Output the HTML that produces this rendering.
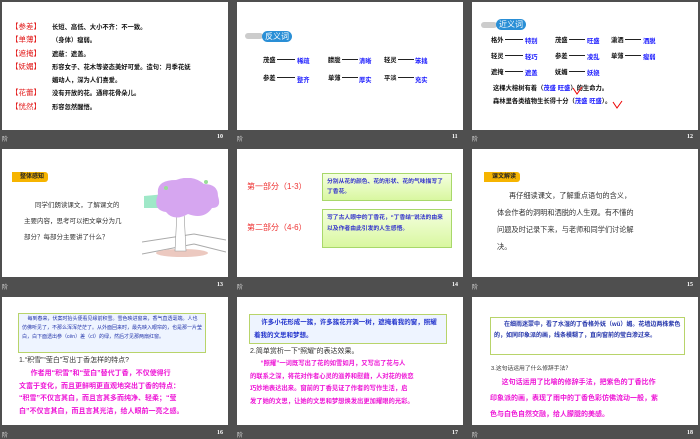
<!DOCTYPE html>
<html><head><meta charset="utf-8"><style>
*{margin:0;padding:0;box-sizing:border-box}
body{width:700px;height:438px;background:#4f4f4f;position:relative;overflow:hidden;font-family:"Liberation Sans","Noto Sans CJK SC",sans-serif}
.s{position:absolute;background:#fff;width:226px;height:128px}
.a{position:absolute;white-space:nowrap}
.w{white-space:normal}
.ft{position:absolute;color:#ddd;font-size:6px}
.pn{position:absolute;color:#fff;font-size:6px;font-weight:bold;font-family:"Liberation Serif",serif}
.r{color:#e21b1b;font-size:7.5px}
.k{color:#111;font-size:6.3px;font-weight:bold}
.b{color:#1a1aff;font-size:6.3px;font-weight:bold}
.ln{position:absolute;height:1px;background:#222}
.pill{position:absolute;background:#2a8fd6;color:#fff;border-radius:7px;font-size:8px;padding:0 3px;line-height:11px}
.tag{position:absolute;background:#f6b400;color:#222;font-size:6px;font-weight:bold;line-height:10px;padding:0 4px 0 8px;border-radius:0 3px 3px 0}
.m{color:#ee16d6;font-weight:bold}
</style></head><body>

<!-- slide 10 -->
<div class="s" style="left:2px;top:2px"></div>
<div class="a r" style="left:11px;top:20px;line-height:13.3px">【参差】<br>【单薄】<br>【遮掩】<br>【妩媚】<br><br>【花蕾】<br>【恍然】</div>
<div class="a k" style="left:52px;top:21px;line-height:13.3px">长短、高低、大小不齐：不一致。<br>（身体）瘦弱。<br>遮蔽：遮盖。<br>形容女子、花木等姿态美好可爱。造句：月季花妩<br>媚动人，深为人们喜爱。<br>没有开放的花。通称花骨朵儿。<br>形容忽然醒悟。</div>
<div class="ft" style="left:2px;top:134px">阶</div><div class="pn" style="left:217px;top:134px">10</div>

<!-- slide 11 -->
<div class="s" style="left:237px;top:2px"></div>
<div class="a" style="left:245px;top:33px;width:18px;height:6px;background:#ccc;border-radius:3px"></div>
<div class="pill" style="left:262px;top:31px">反义词</div>
<div class="a k" style="left:263px;top:55px">茂盛</div><div class="ln" style="left:277px;top:59px;width:18px"></div><div class="a b" style="left:297px;top:56px">稀疏</div>
<div class="a k" style="left:328px;top:55px">朦胧</div><div class="ln" style="left:342px;top:59px;width:16px"></div><div class="a b" style="left:359px;top:56px">清晰</div>
<div class="a k" style="left:384px;top:55px">轻灵</div><div class="ln" style="left:398px;top:59px;width:16px"></div><div class="a b" style="left:415px;top:56px">笨拙</div>
<div class="a k" style="left:263px;top:73px">参差</div><div class="ln" style="left:277px;top:77px;width:18px"></div><div class="a b" style="left:297px;top:75px">整齐</div>
<div class="a k" style="left:328px;top:73px">单薄</div><div class="ln" style="left:342px;top:77px;width:16px"></div><div class="a b" style="left:359px;top:75px">厚实</div>
<div class="a k" style="left:384px;top:73px">平淡</div><div class="ln" style="left:398px;top:77px;width:16px"></div><div class="a b" style="left:415px;top:75px">充实</div>
<div class="ft" style="left:237px;top:134px">阶</div><div class="pn" style="left:452px;top:134px">11</div>

<!-- slide 12 -->
<div class="s" style="left:472px;top:2px"></div>
<div class="a" style="left:481px;top:22px;width:16px;height:6px;background:#ccc;border-radius:3px"></div>
<div class="pill" style="left:496px;top:19px">近义词</div>
<div class="a k" style="left:491px;top:35px">格外</div><div class="ln" style="left:505px;top:39px;width:18px"></div><div class="a b" style="left:525px;top:36px">特别</div>
<div class="a k" style="left:555px;top:35px">茂盛</div><div class="ln" style="left:569px;top:39px;width:16px"></div><div class="a b" style="left:587px;top:36px">旺盛</div>
<div class="a k" style="left:611px;top:35px">潇洒</div><div class="ln" style="left:625px;top:39px;width:16px"></div><div class="a b" style="left:643px;top:36px">洒脱</div>
<div class="a k" style="left:491px;top:51px">轻灵</div><div class="ln" style="left:505px;top:55px;width:18px"></div><div class="a b" style="left:525px;top:52px">轻巧</div>
<div class="a k" style="left:555px;top:51px">参差</div><div class="ln" style="left:569px;top:55px;width:16px"></div><div class="a b" style="left:587px;top:52px">凌乱</div>
<div class="a k" style="left:611px;top:51px">单薄</div><div class="ln" style="left:625px;top:55px;width:16px"></div><div class="a b" style="left:643px;top:52px">瘦弱</div>
<div class="a k" style="left:491px;top:67px">遮掩</div><div class="ln" style="left:505px;top:71px;width:18px"></div><div class="a b" style="left:525px;top:68px">遮盖</div>
<div class="a k" style="left:555px;top:67px">妩媚</div><div class="ln" style="left:569px;top:71px;width:16px"></div><div class="a b" style="left:587px;top:68px">妖娆</div>
<div class="a k" style="left:493px;top:83px">这棵大榕树有着（<span class="b">茂盛 旺盛</span>）的生命力。</div>
<div class="a k" style="left:493px;top:96px">森林里各类植物生长得十分（<span class="b">茂盛 旺盛</span>）。</div>
<svg class="a" style="left:572px;top:86px" width="12" height="10"><path d="M1 2 L5 8 L10 1" stroke="#e00" fill="none"/></svg>
<svg class="a" style="left:612px;top:100px" width="12" height="10"><path d="M1 2 L5 8 L10 1" stroke="#e00" fill="none"/></svg>
<div class="ft" style="left:472px;top:134px">阶</div><div class="pn" style="left:687px;top:134px">12</div>

<!-- slide 13 -->
<div class="s" style="left:2px;top:149px"></div>
<div class="tag" style="left:12px;top:172px">整体感知</div>
<div class="a" style="left:24px;top:198px;font-size:6.5px;color:#333;line-height:16px">&nbsp;&nbsp;&nbsp;&nbsp;&nbsp;&nbsp;同学们朗读课文，了解课文的<br>主要内容，思考可以把文章分为几<br>部分？每部分主要讲了什么？</div>
<svg class="a" style="left:142px;top:178px" width="84" height="80">
<path d="M2 18 L24 16 L24 30 L2 30Z" fill="#9fe8c8"/>
<path d="M0 64 L52 56 M0 76 L52 66 M52 56 L84 62 M52 66 L84 74" stroke="#aaa" fill="none"/>
<ellipse cx="40" cy="75" rx="26" ry="4" fill="#ecc9c0"/>
<path d="M33 73 L35 34 L42 34 L44 73Z" fill="#fff" stroke="#999" stroke-width=".6"/>
<path d="M16 16 Q14 2 34 2 Q50 -4 62 6 Q76 6 76 18 Q80 30 70 30 Q62 42 46 36 Q32 44 24 34 Q10 32 16 16Z" fill="#d6a6f0"/>
<circle cx="24" cy="10" r="2" fill="#9d9"/><circle cx="64" cy="4" r="2" fill="#9d9"/>
</svg>
<div class="ft" style="left:2px;top:282px">阶</div><div class="pn" style="left:217px;top:282px">13</div>

<!-- slide 14 -->
<div class="s" style="left:237px;top:149px"></div>
<div class="a" style="left:247px;top:181px;font-size:8px;color:#e33">第一部分（1-3）</div>
<div class="a" style="left:247px;top:222px;font-size:8px;color:#e33">第二部分（4-6）</div>
<div class="a w" style="left:322px;top:173px;width:130px;height:28px;background:linear-gradient(#f4ffe0,#d9f7a0);border:1px solid #a8d86a;font-size:5.8px;color:#33c;font-weight:bold;padding:3px 4px;line-height:10px">分别从花的颜色、花的形状、花的气味描写了丁香花。</div>
<div class="a w" style="left:322px;top:209px;width:130px;height:39px;background:linear-gradient(#f4ffe0,#d9f7a0);border:1px solid #a8d86a;font-size:5.8px;color:#33c;font-weight:bold;padding:3px 4px;line-height:10.5px">写了古人眼中的丁香花，“丁香结”说法的由来以及作者由此引发的人生感悟。</div>
<div class="ft" style="left:237px;top:282px">阶</div><div class="pn" style="left:452px;top:282px">14</div>

<!-- slide 15 -->
<div class="s" style="left:472px;top:149px"></div>
<div class="tag" style="left:484px;top:172px">课文解读</div>
<div class="a" style="left:497px;top:187px;font-size:7.2px;color:#333;line-height:17px">&nbsp;&nbsp;&nbsp;&nbsp;&nbsp;&nbsp;再仔细读课文，了解重点语句的含义，<br>体会作者的洞明和洒脱的人生观。有不懂的<br>问题及时记录下来，与老师和同学们讨论解<br>决。</div>
<div class="ft" style="left:472px;top:282px">阶</div><div class="pn" style="left:687px;top:282px">15</div>

<!-- slide 16 -->
<div class="s" style="left:2px;top:297px"></div>
<div class="a w" style="left:18px;top:313px;width:188px;height:40px;background:#eef4ff;border:1px solid #b8d46a;font-size:5px;color:#2233aa;line-height:9px;padding:1px 3px">&nbsp;&nbsp;&nbsp;&nbsp;每到春来，伏案时抬头便看见缘前积雪。雪色映进窗来，香气直透毫端。人也仿佛听见了，不那么浑浑茫茫了。从外面回来时，最先映入眼帘的，也是那一片莹白，白下面透出参（cēn）差（cī）的绿，然后才见那两扇红窗。</div>
<div class="a" style="left:19px;top:355px;font-size:7px;color:#333">1.“积雪”“莹白”写出丁香怎样的特点?</div>
<div class="a m" style="left:19px;top:368px;font-size:7px;line-height:12.5px">&nbsp;&nbsp;&nbsp;&nbsp;&nbsp;&nbsp;作者用“积雪”和“莹白”替代丁香，不仅使得行<br>文富于变化，而且更鲜明更直观地突出丁香的特点：<br>“积雪”不仅言其白，而且言其多而纯净、轻柔；“莹<br>白”不仅言其白，而且言其光洁，给人眼前一亮之感。</div>
<div class="ft" style="left:2px;top:430px">阶</div><div class="pn" style="left:217px;top:430px">16</div>

<!-- slide 17 -->
<div class="s" style="left:237px;top:297px"></div>
<div class="a w" style="left:249px;top:314px;width:198px;height:30px;background:#eef4ff;border:1px solid #b8d46a;font-size:6.5px;color:#2233cc;font-weight:bold;line-height:13px;padding:1px 4px">&nbsp;&nbsp;&nbsp;&nbsp;许多小花形成一簇，许多簇花开满一树，遮掩着我的窗，照耀着我的文思和梦想。</div>
<div class="a" style="left:250px;top:346px;font-size:7px;color:#333">2.简单赏析一下“照耀”的表达效果。</div>
<div class="a m" style="left:250px;top:358px;font-size:6.3px;line-height:12.5px">&nbsp;&nbsp;&nbsp;&nbsp;&nbsp;&nbsp;“照耀”一词既写出了花的如雪如月，又写出了花与人<br>的联系之深，将花对作者心灵的滋养和慰藉，人对花的依恋<br>巧妙地表达出来。窗前的丁香见证了作者的写作生活，启<br>发了她的文思，让她的文思和梦想焕发出更加耀眼的光彩。</div>
<div class="ft" style="left:237px;top:430px">阶</div><div class="pn" style="left:452px;top:430px">17</div>

<!-- slide 18 -->
<div class="s" style="left:472px;top:297px"></div>
<div class="a w" style="left:490px;top:317px;width:195px;height:38px;background:#fff;border:1px solid #b8d46a;font-size:6px;color:#2233aa;font-weight:bold;line-height:11px;padding:2px 3px">&nbsp;&nbsp;&nbsp;&nbsp;&nbsp;&nbsp;在细雨迷蒙中，看了水湿的丁香格外妩（wǔ）媚。花墙边两株紫色的，如同印象派的画，线条模糊了，直向窗前的莹白渗过来。</div>
<div class="a" style="left:491px;top:363px;font-size:5.8px;color:#333">3.这句话运用了什么修辞手法？</div>
<div class="a m" style="left:490px;top:375px;font-size:7px;line-height:16px">&nbsp;&nbsp;&nbsp;&nbsp;&nbsp;&nbsp;这句话运用了比喻的修辞手法，把紫色的丁香比作<br>印象派的画，表现了雨中的丁香色彩仿佛流动一般，紫<br>色与白色自然交融，给人朦胧的美感。</div>
<div class="ft" style="left:472px;top:430px">阶</div><div class="pn" style="left:687px;top:430px">18</div>

</body></html>
